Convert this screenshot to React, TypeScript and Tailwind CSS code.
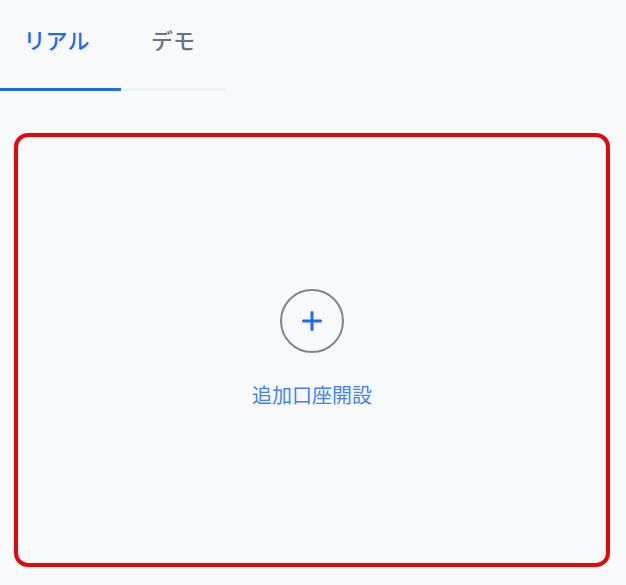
import React from "react";

export default function App() {
  return (
    <div
      className="w-[626px] h-[585px] bg-[#f8f9fb] flex flex-col"
      style={{ fontFamily: '"Noto Sans CJK JP", "Noto Sans", sans-serif' }}
    >
      <div className="flex w-[225px] h-[91px] border-b-[3px] border-[#f0f1f4]">
        <div className="w-[121px] flex items-center justify-center pr-[8px] pb-[10px] text-[22px] font-medium leading-none text-[#1f6bf0] border-b-[3px] border-[#1f6bf0] -mb-[3px]">
          リアル
        </div>
        <div className="w-[104px] flex items-center justify-center pb-[10px] text-[22px] font-medium leading-none text-[#6b7280]">
          デモ
        </div>
      </div>
      <div className="mt-[42px] ml-[14px] w-[596px] h-[434px] rounded-[14px] border-[4px] border-[#e00a0a] flex flex-col items-center justify-center">
        <div className="mt-[-6px] w-[64px] h-[64px] rounded-full border-2 border-[#80848c] flex items-center justify-center">
          <svg width="20" height="20" viewBox="0 0 20 20" fill="none">
            <path d="M10 1.5V18.5M1.5 10H18.5" stroke="#1f6bf0" strokeWidth="3" strokeLinecap="round" />
          </svg>
        </div>
        <div className="mt-[32px] text-[20px] font-normal leading-none text-[#4283ef]">追加口座開設</div>
      </div>
    </div>
  );
}
